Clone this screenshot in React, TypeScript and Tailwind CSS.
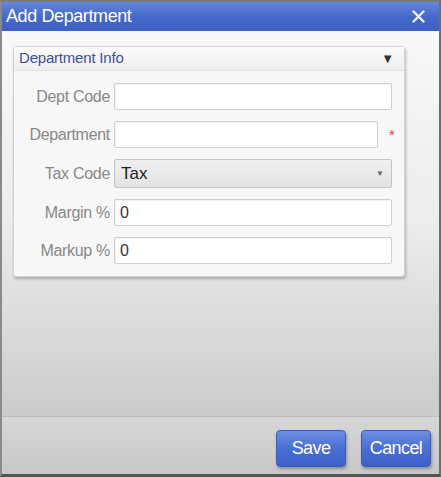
import React from 'react';

const rows = [
  { label: 'Dept Code', value: '', required: false },
  { label: 'Department', value: '', required: true },
  { label: 'Tax Code', value: 'Tax', select: true },
  { label: 'Margin %', value: '0' },
  { label: 'Markup %', value: '0' },
];

export default function App() {
  return (
    <div
      className="w-[441px] h-[477px] flex flex-col border-l-2 border-r-2 border-t-2 border-b-[3px] border-l-[#8a8a8a] border-r-[#6d6d6d] border-t-[#7a7a7a] border-b-[#555] bg-[#e4e4e4] overflow-hidden"
      style={{ fontFamily: '"Liberation Sans", Arial, sans-serif' }}
    >
      {/* title bar */}
      <div className="h-[29px] flex items-center justify-between pl-1 pr-3 bg-gradient-to-b from-[#6586dc] via-[#4669cc] to-[#3d5fc4] text-white">
        <span className="text-[18px] tracking-[-0.4px]">Add Department</span>
        <svg width="13" height="13" viewBox="0 0 13 13" className="mr-0.5">
          <path d="M1.5 1.5 L11.5 11.5 M11.5 1.5 L1.5 11.5" stroke="#eef2ff" strokeWidth="2.4" strokeLinecap="round" />
        </svg>
      </div>

      {/* body */}
      <div className="flex-1 flex flex-col bg-gradient-to-b from-[#f8f8f8] via-[#ececec] to-[#cbcbcb] pl-[11px] pr-[34px] pt-[15px]">
        <div className="rounded-[3px] border border-[#d2d2d2] bg-[#f7f7f7] shadow-[1px_2px_3px_rgba(0,0,0,0.25)]">
          <div className="h-[24px] flex items-center justify-between pl-[5px] pr-[10px] bg-gradient-to-b from-[#fbfbfb] to-[#eeeeee] border-b border-[#e2e2e2]">
            <span className="text-[15px] text-[#3c4fa6] tracking-[-0.2px]">Department Info</span>
            <span className="text-[13px] text-[#333]">▼</span>
          </div>
          <div className="flex flex-col gap-[11px] pt-[12px] pb-[12px] pl-[2px]">
            {rows.map((r) => (
              <div key={r.label} className="flex items-center">
                <div className="w-[98px] text-right pr-[4px] text-[16px] text-[#888] tracking-[-0.3px] whitespace-nowrap">
                  {r.label}
                </div>
                {r.select ? (
                  <div className="w-[278px] h-[29px] flex items-center justify-between pl-[6px] pr-[7px] border border-[#c4c4c4] rounded-[2px] bg-gradient-to-b from-[#f0f0f0] to-[#e2e2e2]">
                    <span className="text-[17px] text-[#222]">{r.value}</span>
                    <span className="text-[8px] text-[#666]">▼</span>
                  </div>
                ) : (
                  <div className={`h-[27px] flex items-center pl-[5px] border border-[#cfcfcf] rounded-[2px] bg-white shadow-[inset_1px_1px_1px_rgba(0,0,0,0.06)] ${r.required ? 'w-[264px]' : 'w-[278px]'}`}>
                    <span className="text-[16px] text-[#333]">{r.value}</span>
                  </div>
                )}
                {r.required && <span className="ml-[11px] text-[15px] text-[#e23a3a] leading-none">*</span>}
              </div>
            ))}
          </div>
        </div>
      </div>

      {/* footer */}
      <div className="h-[58px] flex items-center justify-end gap-[15px] pr-[8px] border-t border-[#bdbdbd] bg-gradient-to-b from-[#d6d6d6] to-[#c8c8c8]">
        {['Save', 'Cancel'].map((b) => (
          <button
            key={b}
            className="w-[70px] h-[37px] mt-[5px] rounded-[4px] border border-[#3a5cc0] bg-gradient-to-b from-[#6b8de3] via-[#4a6fd3] to-[#3c60c8] text-white text-[18px] tracking-[-0.6px] shadow-[1px_2px_3px_rgba(0,0,0,0.3)]"
          >
            {b}
          </button>
        ))}
      </div>
    </div>
  );
}
